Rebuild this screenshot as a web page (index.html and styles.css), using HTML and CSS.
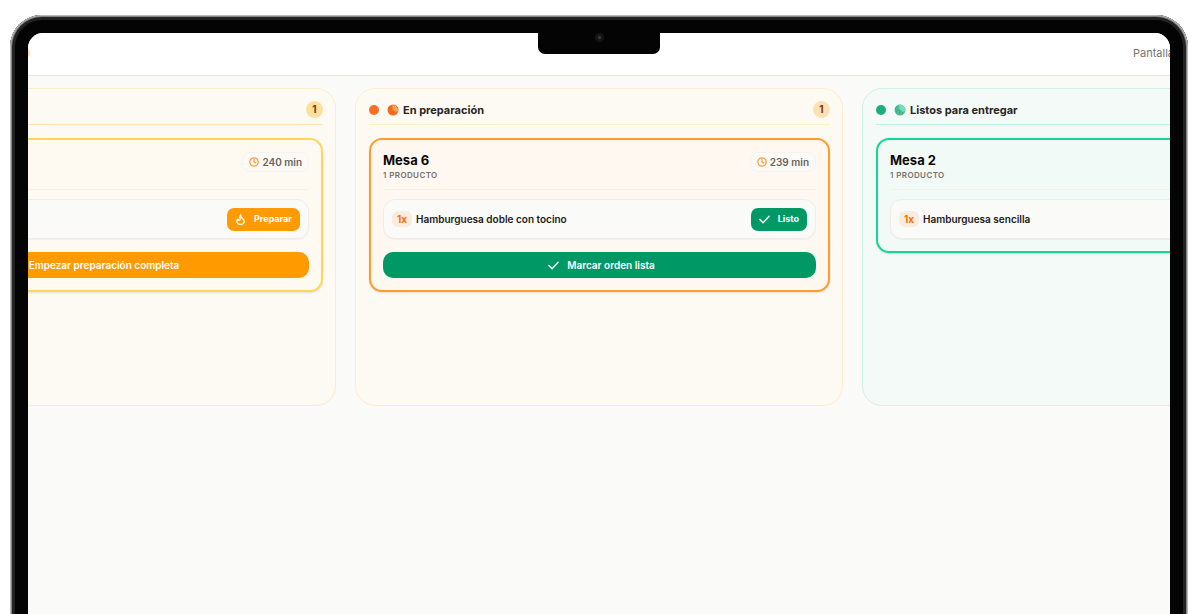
FILE: index.html
```html
<!DOCTYPE html>
<html lang="es">
<head>
<meta charset="utf-8">
<title>Pantalla de cocina</title>
<link rel="stylesheet" href="styles.css">
</head>
<body>
<svg class="defs" aria-hidden="true">
  <symbol id="clock" viewBox="0 0 24 24"><circle cx="12" cy="12" r="10"/><path d="M12 6v6l4 2"/></symbol>
  <symbol id="check" viewBox="0 0 24 24"><path d="M22 5 9 19l-7-7"/></symbol>
  <symbol id="flame" viewBox="0 0 24 24"><path d="M12 2c1 4 2 6 4 8s4 3 4 6a8 7 0 0 1-16 0c0-2 .5-4 2-5 0 2 1 3 2.500 3S11 13 11 11c0-3-2-5 1-9z"/></symbol>
</svg>
<div class="device">
  <div class="notch"><span class="camera"></span></div>
  <div class="screen">
    <header class="topbar">
      <span class="logo"></span>
      <span class="view-name">Pantalla</span>
    </header>
    <main class="board">
      <section class="column pending">
        <div class="column-head">
          <span class="count">1</span>
        </div>
        <article class="card">
          <div class="card-head">
            <span class="time"><svg class="icon"><use href="#clock"/></svg>240 min</span>
          </div>
          <div class="item">
            <button class="btn small"><svg class="icon"><use href="#flame"/></svg>Preparar</button>
          </div>
          <button class="btn wide"><svg class="icon"><use href="#flame"/></svg>Empezar preparación completa</button>
        </article>
      </section>
      <section class="column cooking">
        <div class="column-head">
          <span class="dot"></span>
          <svg class="orb" viewBox="0 0 12 12"><circle cx="6" cy="6" r="5.500" fill="#f26a1e"/><path d="M5 1.500A5 5 0 0 1 11 7L9 8.500 8 7 6 6.500 5.500 4z" fill="#f9a04e"/><path d="m6 2 1 1m1-1 1 1M7 5l1 1m1-2 1 1" stroke="#fdc67e" stroke-width=".8"/></svg>
          <h2>En preparación</h2>
          <span class="count">1</span>
        </div>
        <article class="card">
          <div class="card-head">
            <div><h3>Mesa 6</h3><p class="total">1 PRODUCTO</p></div>
            <span class="time"><svg class="icon"><use href="#clock"/></svg>239 min</span>
          </div>
          <div class="item">
            <span class="qty">1x</span><span class="name">Hamburguesa doble con tocino</span>
            <button class="btn small"><svg class="icon"><use href="#check"/></svg>Listo</button>
          </div>
          <button class="btn wide"><svg class="icon"><use href="#check"/></svg>Marcar orden lista</button>
        </article>
      </section>
      <section class="column ready">
        <div class="column-head">
          <span class="dot"></span>
          <svg class="orb" viewBox="0 0 12 12"><circle cx="6" cy="6" r="5.500" fill="#4fbd98"/><path d="M5 .6A5.500 5.500 0 0 1 11.500 6L10 8 7.500 7 5.500 5z" fill="#76dcb9"/><path d="M2 3h1M1 5h1m1 1h1M2 8h1m2-1h1M5 9h1m2 0h1" stroke="#279b75"/></svg>
          <h2>Listos para entregar</h2>
        </div>
        <article class="card">
          <div class="card-head">
            <div><h3>Mesa 2</h3><p class="total">1 PRODUCTO</p></div>
          </div>
          <div class="item">
            <span class="qty">1x</span><span class="name">Hamburguesa sencilla</span>
          </div>
        </article>
      </section>
    </main>
  </div>
</div>
</body>
</html>
```
FILE: styles.css
```css
* { box-sizing: border-box; }
html { background: #fff; }
body {
  margin: 0;
  height: 100vh;
  padding: 15px 12px 0 10px;
  overflow: hidden;
  font-family: Inter, "Liberation Sans", sans-serif;
  color: #1c1917;
}
h2, h3, p { margin: 0; }
.defs { display: none; }

.device {
  position: relative;
  height: calc(100% + 20px);
  padding: 18px 18px 0;
  border-radius: 32px 32px 0 0;
  background: #040404;
  box-shadow: inset 0 0 0 1px #b9b9b9, inset 0 0 0 2px #858585, inset 0 0 0 5px #232323;
}
.notch {
  position: absolute;
  z-index: 1;
  top: 17px;
  left: 50%;
  width: 122px;
  height: 22px;
  padding-top: 1px;
  transform: translateX(-50%);
  border-radius: 0 0 7px 7px;
  background: #040404;
}
.camera {
  display: block;
  width: 9px;
  height: 9px;
  margin: 0 auto;
  border-radius: 50%;
  background: radial-gradient(#3a3a3a 0 1px, #151515 2px);
}
.screen {
  height: 100%;
  overflow: hidden;
  border-radius: 15px 15px 0 0;
  background: #fafaf9;
}
.topbar {
  display: flex;
  align-items: center;
  justify-content: space-between;
  height: 43px;
  padding-bottom: 2px;
  background: #fff;
  border-bottom: 1px solid #e7e5e4;
}
.logo {
  width: 12px;
  height: 12px;
  margin-left: -10px;
  border-radius: 50%;
  background: #ffdcae;
}
.view-name {
  margin-right: -4px;
  font-size: 11px;
  color: #79716b;
}

.board {
  display: flex;
  justify-content: center;
  gap: 19px;
  padding-top: 12px;
}
.column {
  flex: 0 0 calc(50% - 83px);
  min-height: 318px;
  padding: 12px 12px 12px 13px;
  border: 1px solid var(--edge);
  border-radius: 20px;
  background: var(--tint);
}
.pending { --edge: #ffebc4; --rule: #ffe4ac; --tint: #fdfaf3; --line: #ffd65c; --paper: #fffaf1; --fill: #ff9a00; --badge: #fde09d; }
.cooking { --edge: #feebcd; --rule: #ffeccd; --tint: #fdfaf4; --line: #fe9d2e; --paper: #fef8f1; --fill: #009966; --badge: #fce1b3; --dot: #f66f22; }
.ready { --edge: #cbf5e3; --rule: #bff3dd; --tint: #f4faf8; --line: #12d796; --paper: #f2faf7; --dot: #1fab7b; }

.column-head {
  display: flex;
  align-items: center;
  height: 24px;
  padding-bottom: 6px;
  border-bottom: 1px solid var(--rule);
}
.dot {
  width: 10px;
  height: 10px;
  border-radius: 50%;
  background: var(--dot);
}
.orb {
  width: 12px;
  height: 12px;
  margin: 0 4px 0 8px;
}
h2 {
  font-size: 11px;
  line-height: 16px;
  font-weight: 700;
  color: #292524;
}
.count {
  min-width: 17px;
  margin-left: auto;
  border-radius: 9px;
  background: var(--badge);
  font-size: 10px;
  line-height: 17px;
  font-weight: 700;
  text-align: center;
  color: #7b3306;
}

.card {
  margin-top: 13px;
  padding: 12px;
  border: 2px solid var(--line);
  border-radius: 13px;
  background: var(--paper);
  box-shadow: 0 1px 2px #0000001c;
}
.card-head {
  display: flex;
  align-items: flex-start;
  justify-content: space-between;
  height: 38px;
  border-bottom: 1px solid #f3f0ea;
}
h3 {
  font-size: 13px;
  line-height: 16px;
  font-weight: 700;
  color: #0c0a09;
}
.total {
  font-size: 8px;
  line-height: 14px;
  font-weight: 600;
  letter-spacing: 0.4px;
  color: #79716b;
}
.time {
  display: flex;
  align-items: center;
  gap: 3px;
  margin-left: auto;
  padding: 0 6px;
  border: 1px solid #f5f3f0;
  border-radius: 8px;
  background: #fcfaf7;
  font-size: 10px;
  line-height: 18px;
  font-weight: 600;
  color: #6a625c;
}
.icon {
  width: 11px;
  height: 11px;
  fill: none;
  stroke: currentColor;
  stroke-width: 3;
  stroke-linecap: round;
  stroke-linejoin: round;
}
.time .icon { width: 10px; height: 10px; color: #f99a35; }

.item {
  display: flex;
  align-items: center;
  height: 40px;
  margin-top: 9px;
  padding: 0 8px;
  border: 1px solid #eeedeb;
  border-radius: 12px;
  background: #fafaf9;
  box-shadow: 0 1px 1px #0000000a;
}
.qty {
  width: 20px;
  margin-right: 4px;
  border-radius: 6px;
  background: #f9ecdf;
  font-size: 10px;
  line-height: 16px;
  font-weight: 700;
  text-align: center;
  color: #f5700c;
}
.name {
  font-size: 10px;
  font-weight: 600;
  color: #1c1917;
}
.btn {
  display: flex;
  align-items: center;
  justify-content: center;
  gap: 8px;
  border: 0;
  background: var(--fill);
  font: 600 10px/16px Inter, "Liberation Sans", sans-serif;
  color: #fff;
}
.small {
  height: 23px;
  margin-left: auto;
  padding: 0 8px;
  border-radius: 7px;
  font-size: 9px;
  font-weight: 700;
}
.wide {
  width: 100%;
  height: 26px;
  margin-top: 13px;
  padding: 0 4px 0 8px;
  border-radius: 10px;
}
```
